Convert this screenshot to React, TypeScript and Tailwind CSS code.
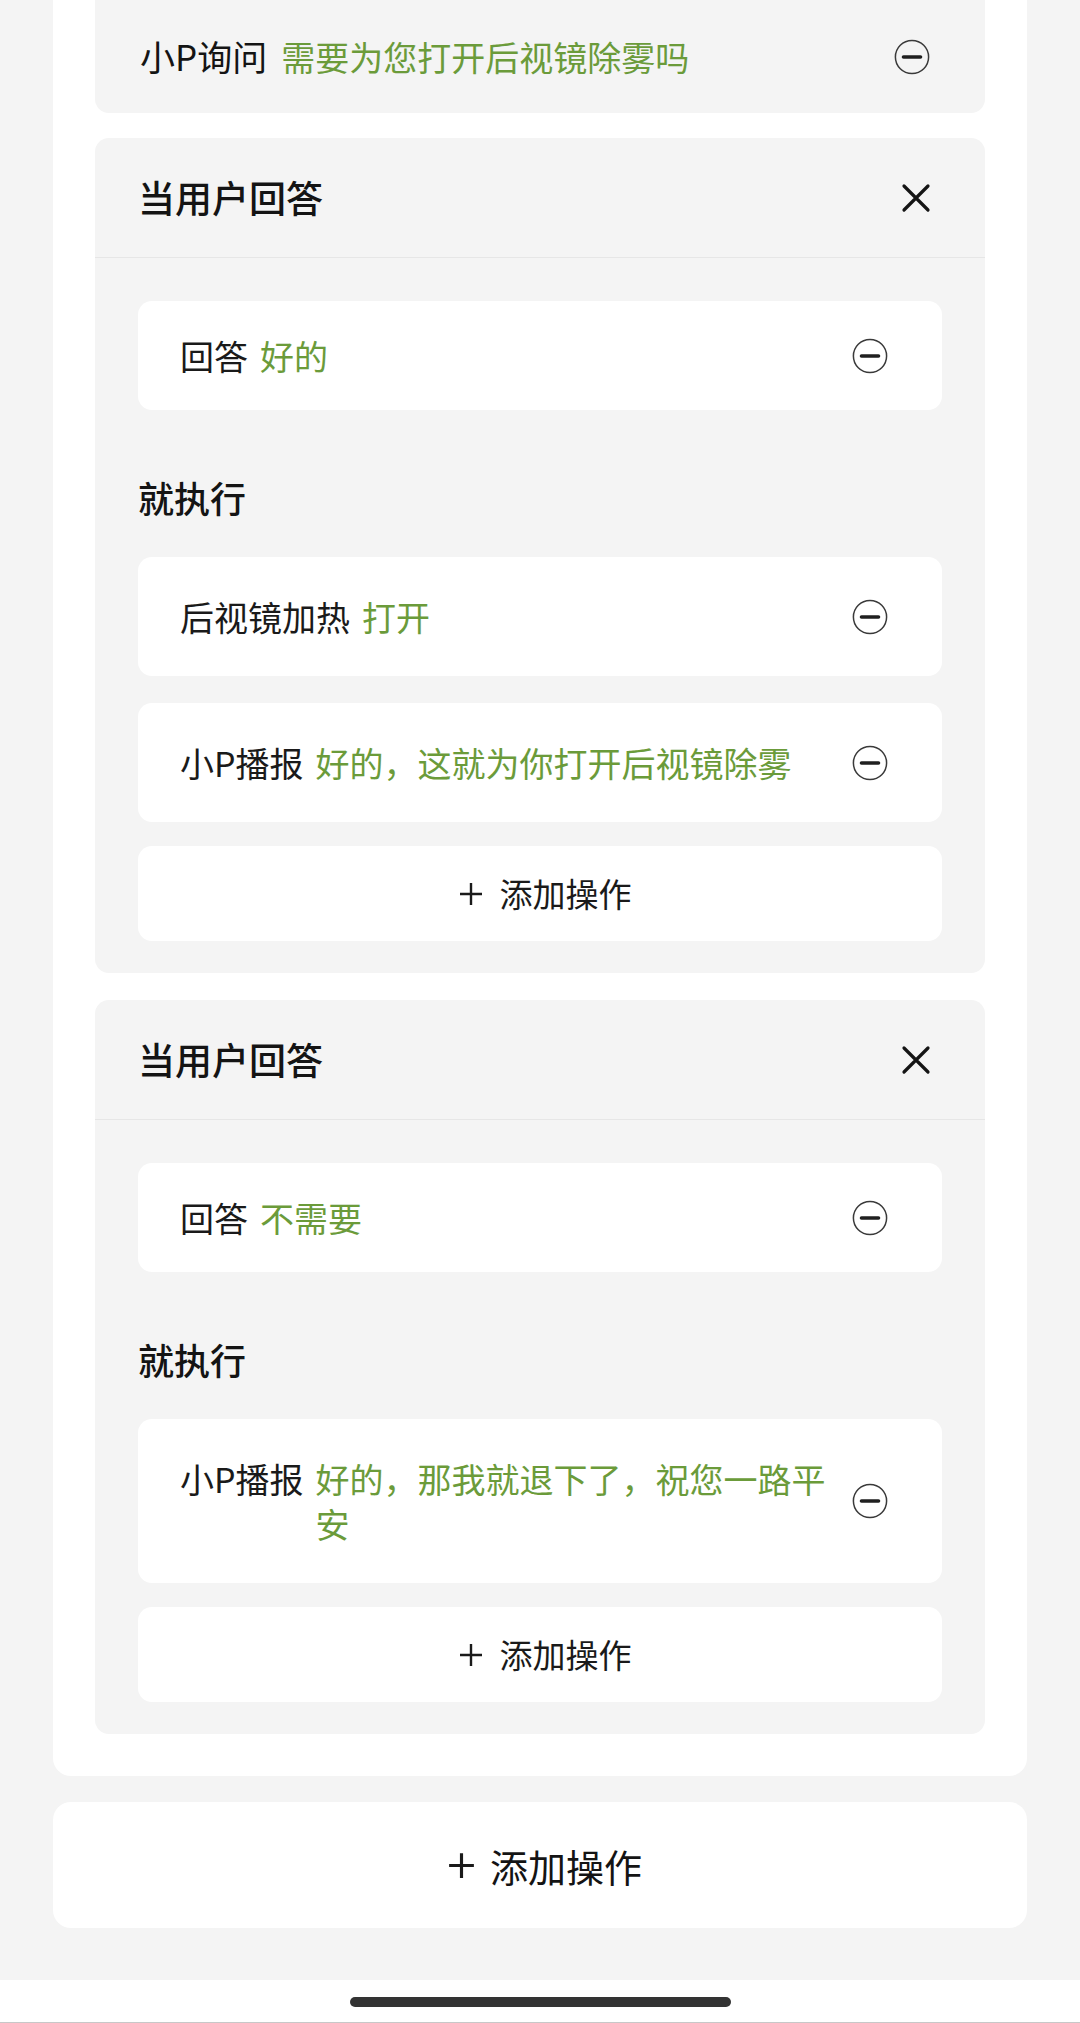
const GREEN = "text-[#6b9b3a]";

function MinusCircle() {
    return (
        <svg width="36" height="36" viewBox="0 0 36 36" className="shrink-0">
            <circle cx="18" cy="18" r="16.6" fill="none" stroke="#3a3a3a" strokeWidth="1.5"/>
            <line x1="9.5" y1="18" x2="26.5" y2="18" stroke="#1f1f1f" strokeWidth="3.6" strokeLinecap="round"/>
        </svg>
    );
}

function CloseIcon() {
    return (
        <svg width="30" height="30" viewBox="0 0 30 30" className="shrink-0">
            <path d="M3 3 L27 27 M27 3 L3 27" stroke="#141414" strokeWidth="3.2" strokeLinecap="round"/>
        </svg>
    );
}

function PlusIcon({size, stroke}: { size: number; stroke: number }) {
    return (
        <svg width={size} height={size} viewBox="0 0 24 24" className="shrink-0">
            <path d="M12 1 V23 M1 12 H23" stroke="#1a1a1a" strokeWidth={stroke}/>
        </svg>
    );
}

function ItemCard({label, value, answer}: { label: string; value: string; answer?: boolean }) {
    return (
        <div
            className={`bg-white rounded-[14px] flex items-center pl-[42px] pr-[54px] ${answer ? "py-[32px]" : "py-[37px]"}`}>
            <div className="flex-1 flex items-start text-[34px] leading-[45px] mr-[20px]">
                <span className="shrink-0 text-[#1a1a1a]">{label}</span>
                <span className={`ml-[12px] flex-1 ${GREEN}`}>{value}</span>
            </div>
            <MinusCircle/>
        </div>
    );
}

function AddButton() {
    return (
        <div className="bg-white rounded-[14px] h-[95px] flex items-center justify-center gap-[17px] pl-[10px]">
            <PlusIcon size={24} stroke={2.4}/>
            <span className="text-[33px] text-[#1a1a1a]">添加操作</span>
        </div>
    );
}

function Branch({answer, actions}: { answer: string; actions: { label: string; value: string }[] }) {
    return (
        <div className="bg-[#f4f4f4] rounded-[14px] pb-[32px]">
            <div className="h-[120px] flex items-center justify-between pl-[43px] pr-[54px] border-b border-[#e6e6e6]">
                <span className="text-[37px] font-medium text-[#141414]">当用户回答</span>
                <CloseIcon/>
            </div>
            <div className="px-[43px] pt-[43px]">
                <ItemCard label="回答" value={answer} answer/>
                <div className="mt-[63px] mb-[36px] text-[36px] leading-[48px] font-medium text-[#141414]">就执行</div>
                <div className="flex flex-col gap-[27px]">
                    {actions.map((a) => (
                        <ItemCard key={a.value} label={a.label} value={a.value}/>
                    ))}
                </div>
                <div className="mt-[24px]">
                    <AddButton/>
                </div>
            </div>
        </div>
    );
}

export default function App() {
    return (
        <div className="w-[1080px] min-h-[2023px] bg-[#f4f4f4] flex flex-col"
             style={{fontFamily: '"Noto Sans CJK SC", "Noto Sans", sans-serif'}}>
            <div className="mx-[53px] bg-white rounded-b-[18px] px-[42px] pb-[42px]">
                <div
                    className="h-[113px] bg-[#f4f4f4] rounded-b-[14px] flex items-center justify-between pl-[45px] pr-[55px]">
                    <div className="flex items-center">
                        <span className="text-[35px] text-[#141414]">小P询问</span>
                        <span className={`ml-[14px] text-[34px] ${GREEN}`}>需要为您打开后视镜除雾吗</span>
                    </div>
                    <MinusCircle/>
                </div>
                <div className="mt-[25px] flex flex-col gap-[27px]">
                    <Branch answer="好的" actions={[
                        {label: "后视镜加热", value: "打开"},
                        {label: "小P播报", value: "好的，这就为你打开后视镜除雾"},
                    ]}/>
                    <Branch answer="不需要" actions={[
                        {label: "小P播报", value: "好的，那我就退下了，祝您一路平安"},
                    ]}/>
                </div>
            </div>
            <div
                className="mx-[53px] mt-[26px] h-[126px] bg-white rounded-[18px] flex items-center justify-center gap-[15px] pl-[10px]">
                <PlusIcon size={27} stroke={2.8}/>
                <span className="text-[38px] text-[#141414]">添加操作</span>
            </div>
            <div className="flex-1 min-h-[52px]"/>
            <div className="h-[43px] bg-white border-b border-[#c8c8c8] flex justify-center pt-[17px]">
                <div className="w-[381px] h-[10px] rounded-full bg-[#333333]"/>
            </div>
        </div>
    );
}
